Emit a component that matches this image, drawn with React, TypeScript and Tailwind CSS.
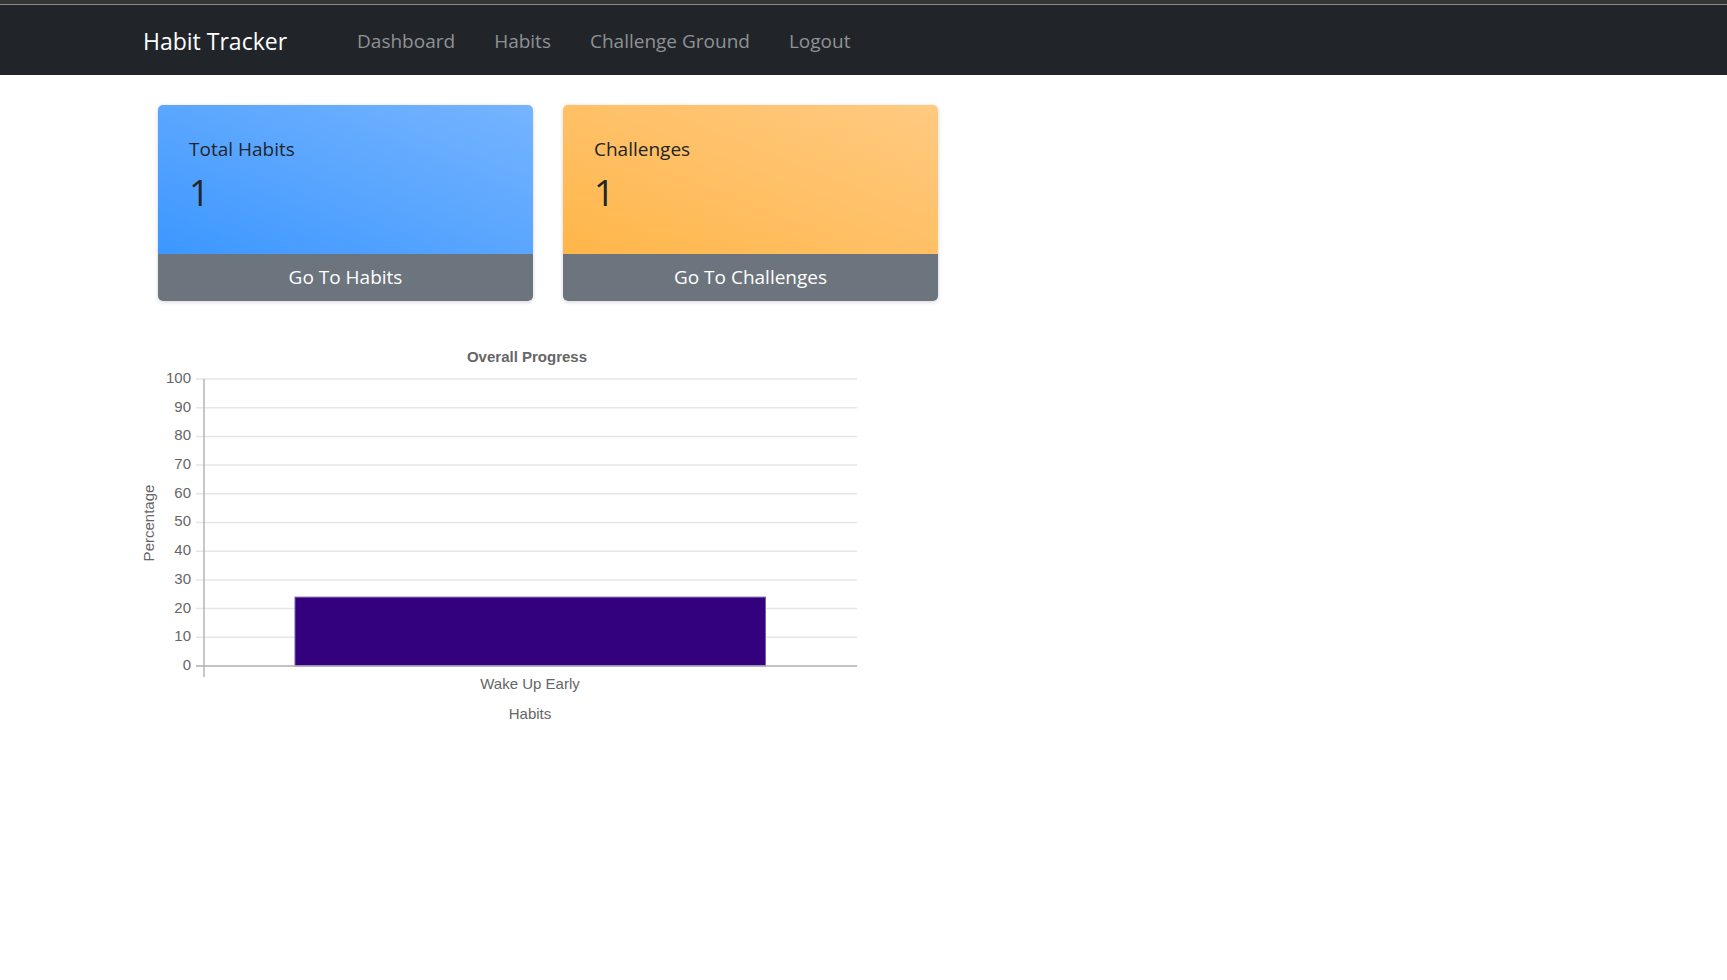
export default function App() {
  const ticks = [100, 90, 80, 70, 60, 50, 40, 30, 20, 10, 0];
  const top = 378;
  const bottom = 665;
  const step = (bottom - top) / 10;
  const value = 24;
  const barTop = bottom - ((bottom - top) * value) / 100;

  return (
    <div className="min-h-screen bg-white" style={{ fontFamily: '"Open Sans", "Noto Sans", sans-serif' }}>
      {/* browser strip */}
      <div className="h-[4px] bg-[#353535]"></div>
      <div className="h-px bg-[#8a8a8a]"></div>

      {/* Navbar */}
      <nav className="flex h-[70px] items-center bg-[#212529] pl-[143px] pt-[2px]">
        <span className="text-[23px] leading-none text-white">Habit Tracker</span>
        <div className="ml-[70px] flex items-center gap-[39px] text-[19px] leading-none text-[#8f9295]">
          <span>Dashboard</span>
          <span>Habits</span>
          <span>Challenge Ground</span>
          <span>Logout</span>
        </div>
      </nav>

      {/* Cards */}
      <div className="mt-[30px] flex gap-[30px] pl-[158px]">
        <div className="w-[375px] overflow-hidden rounded-[5px] shadow-[0_1px_4px_rgba(0,0,0,0.18)]">
          <div className="h-[149px] bg-gradient-to-tr from-[#3b97ff] to-[#75b4ff] px-[31px] pt-[28px] text-[#212529]">
            <div className="text-[19px] leading-[32px]">Total Habits</div>
            <div className="mt-[8px] text-[36px] leading-[40px]">1</div>
          </div>
          <div className="flex h-[47px] items-center justify-center bg-[#6c757d] text-[19px] text-white">
            Go To Habits
          </div>
        </div>

        <div className="w-[375px] overflow-hidden rounded-[5px] shadow-[0_1px_4px_rgba(0,0,0,0.18)]">
          <div className="h-[149px] bg-gradient-to-tr from-[#ffb648] to-[#ffca80] px-[31px] pt-[28px] text-[#212529]">
            <div className="text-[19px] leading-[32px]">Challenges</div>
            <div className="mt-[8px] text-[36px] leading-[40px]">1</div>
          </div>
          <div className="flex h-[47px] items-center justify-center bg-[#6c757d] text-[19px] text-white">
            Go To Challenges
          </div>
        </div>
      </div>

      {/* Chart */}
      <div className="ml-[130px] mt-[30px]">
        <svg width="760" height="400" viewBox="130 330 760 400" style={{ fontFamily: '"Liberation Sans", Arial, sans-serif' }}>
          <text x="527" y="357" textAnchor="middle" dominantBaseline="middle" fontSize="15" fontWeight="bold" fill="#666">
            Overall Progress
          </text>

          {ticks.map((t, i) => {
            const y = top + i * step;
            return (
              <g key={t}>
                <line x1="196" x2="857" y1={y} y2={y} stroke="#e6e6e6" strokeWidth="1.5" />
                <text x="191" y={y} textAnchor="end" dominantBaseline="middle" fontSize="15" fill="#666">
                  {t}
                </text>
              </g>
            );
          })}

          <rect x="295" y={barTop} width="470.5" height={bottom - barTop} fill="#33007e" stroke="#7a5cb0" strokeWidth="1" />

          <line x1="204" x2="204" y1={top} y2="676" stroke="#b5b5b5" strokeWidth="1.5" />
          <line x1="196" x2="857" y1={bottom} y2={bottom} stroke="#b5b5b5" strokeWidth="1.5" />

          <text x="530" y="684" textAnchor="middle" dominantBaseline="middle" fontSize="15" fill="#666">
            Wake Up Early
          </text>
          <text x="530" y="714" textAnchor="middle" dominantBaseline="middle" fontSize="15" fill="#666">
            Habits
          </text>
          <text
            x="150"
            y="522"
            textAnchor="middle"
            dominantBaseline="middle"
            fontSize="15"
            fill="#666"
            transform="rotate(-90 150 522)"
          >
            Percentage
          </text>
        </svg>
      </div>
    </div>
  );
}
